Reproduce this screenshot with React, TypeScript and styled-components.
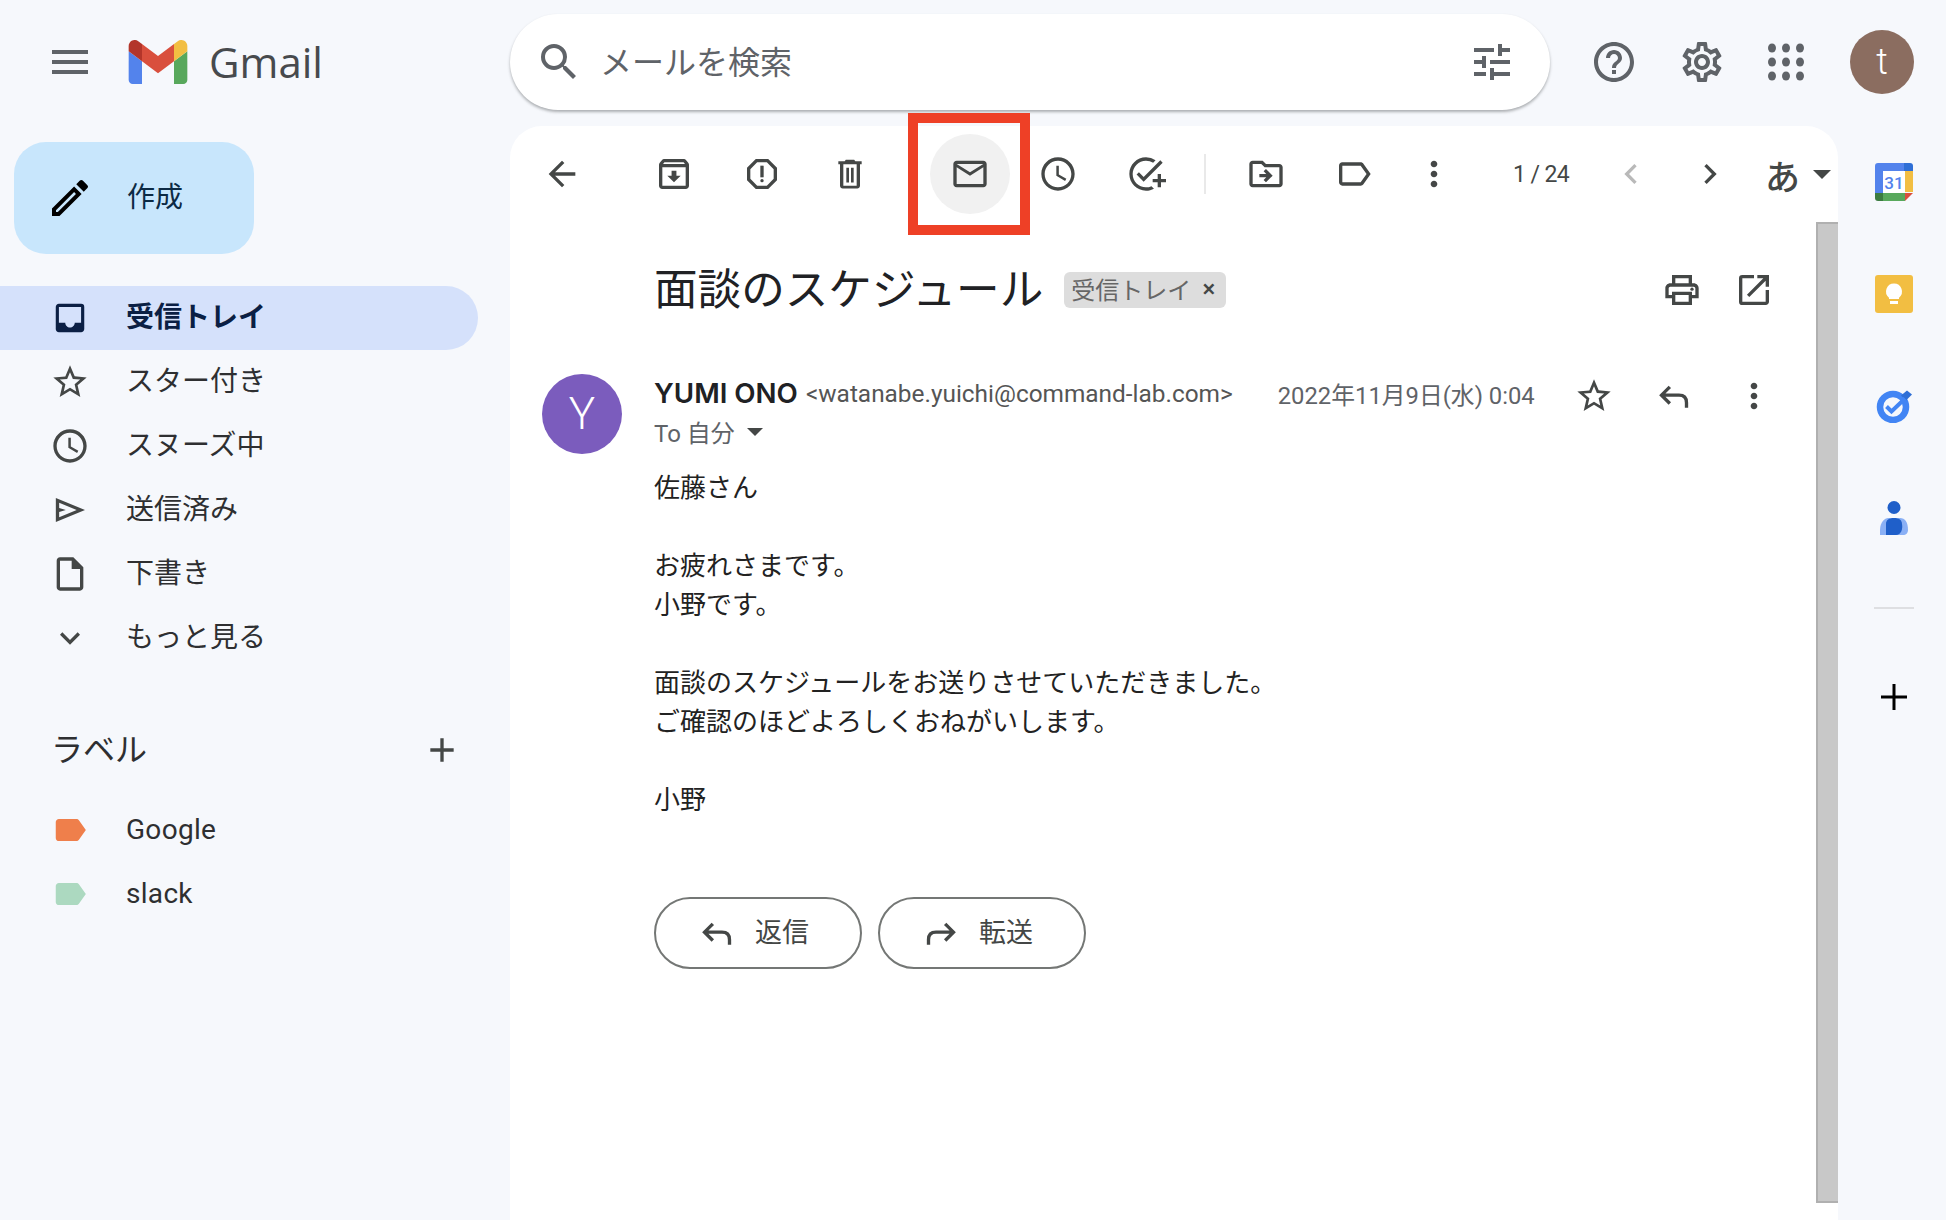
import React from 'react';
import styled, { createGlobalStyle } from 'styled-components';
import {
  MdAdd,
  MdArrowBack,
  MdChevronLeft,
  MdChevronRight,
  MdExpandMore,
  MdHelpOutline,
  MdInbox,
  MdLabel,
  MdMenu,
  MdMoreVert,
  MdOpenInNew,
  MdOutlineAccessTime,
  MdOutlineAddTask,
  MdOutlineArchive,
  MdOutlineCreate,
  MdOutlineDriveFileMove,
  MdOutlineEmail,
  MdOutlineInsertDriveFile,
  MdOutlineLabel,
  MdOutlinePrint,
  MdOutlineReport,
  MdOutlineSettings,
  MdSearch,
  MdStarBorder,
  MdTune,
} from 'react-icons/md';

const GlobalStyle = createGlobalStyle`
  html, body {
    margin: 0;
    padding: 0;
    background: #f6f8fc;
  }
  * {
    box-sizing: border-box;
  }
  body {
    font-family: Roboto, "Noto Sans CJK JP", sans-serif;
  }
`;

const Page = styled.div`
  width: 1946px;
  height: 1220px;
  overflow: hidden;
  display: flex;
  flex-direction: column;
  background: #f6f8fc;
`;

const Header = styled.header`
  height: 126px;
  padding-bottom: 2px;
  display: flex;
  align-items: center;
  flex-shrink: 0;
`;

const Brand = styled.div`
  width: 510px;
  padding-left: 46px;
  display: flex;
  align-items: center;
  color: #5f6368;
`;

const LogoMark = styled.svg`
  width: 60px;
  height: 44px;
  margin-left: 34px;
`;

const Wordmark = styled.span`
  margin-left: 21px;
  font-family: 'Open Sans', sans-serif;
  font-size: 42px;
  line-height: 48px;
  color: #474a4d;
`;

const SearchBar = styled.div`
  width: 1040px;
  height: 96px;
  padding: 0 34px 0 25px;
  display: flex;
  align-items: center;
  background: #fff;
  border-radius: 48px;
  box-shadow: 0 2px 3px rgba(60, 64, 67, 0.4);
  color: #5f6368;
`;

const SearchPlaceholder = styled.span`
  flex: 1;
  margin: 0 2px 4px 17px;
  font-size: 32px;
  color: #5f6368;
`;

const HeaderIcons = styled.div`
  display: flex;
  align-items: center;
  margin-left: 40px;
  gap: 40px;
  color: #5f6368;
`;

const AppsGrid = styled.svg`
  width: 48px;
  height: 48px;
  margin: 0 -4px;
  fill: #5f6368;
`;

const Account = styled.div`
  width: 64px;
  height: 64px;
  margin-left: 4px;
  border-radius: 50%;
  background: #8b6d60;
  color: #fff;
  font-size: 36px;
  font-weight: 300;
  display: flex;
  align-items: center;
  justify-content: center;
`;

const Body = styled.div`
  flex: 1;
  min-height: 0;
  display: flex;
`;

const Sidebar = styled.aside`
  width: 510px;
  flex-shrink: 0;
  padding-top: 16px;
`;

const Compose = styled.div`
  width: 240px;
  height: 112px;
  margin-left: 14px;
  margin-bottom: 32px;
  padding-left: 32px;
  display: flex;
  align-items: center;
  gap: 33px;
  border-radius: 32px;
  background: #c8e6fc;
  color: #0c2a44;
  font-size: 28px;
  svg {
    color: #000;
  }
`;

const ComposeText = styled.span`
  margin-bottom: 7px;
`;

const NavRow = styled.div<{ $active?: boolean }>`
  width: 478px;
  height: 64px;
  display: flex;
  align-items: center;
  border-radius: 0 32px 32px 0;
  font-size: 28px;
  background: ${({ $active }) => ($active ? '#d5e1fb' : 'transparent')};
  color: ${({ $active }) => ($active ? '#0b1f44' : '#2e2f31')};
  font-weight: ${({ $active }) => ($active ? 700 : 400)};
`;

const NavIcon = styled.span<{ $color?: string }>`
  width: 40px;
  height: 40px;
  margin: 0 36px 0 50px;
  display: flex;
  align-items: center;
  justify-content: center;
  color: ${({ $color }) => $color || '#444746'};
`;

const NavText = styled.span<{ $latin?: boolean }>`
  margin-bottom: ${({ $latin }) => ($latin ? 2 : 6)}px;
  letter-spacing: ${({ $latin }) => ($latin ? 0.3 : 0)}px;
`;

const LabelsHeader = styled.div`
  width: 478px;
  height: 64px;
  margin: 48px 0 16px;
  padding: 0 16px 0 51px;
  display: flex;
  align-items: center;
  justify-content: space-between;
  font-size: 32px;
  color: #2e2f31;
  svg {
    color: #444746;
  }
`;

const LabelsTitle = styled.span`
  margin-bottom: 6px;
`;

const Panel = styled.main`
  width: 1328px;
  flex-shrink: 0;
  display: flex;
  flex-direction: column;
  background: #fff;
  border-radius: 32px 32px 0 0;
`;

const Toolbar = styled.div`
  height: 96px;
  flex-shrink: 0;
  padding-left: 12px;
  display: flex;
  align-items: center;
  color: #444746;
`;

const ToolButton = styled.div<{ $width?: number; $gap?: number; $faded?: boolean }>`
  position: relative;
  width: ${({ $width }) => $width || 88}px;
  height: 80px;
  margin-left: ${({ $gap }) => $gap || 0}px;
  flex-shrink: 0;
  display: flex;
  align-items: center;
  justify-content: center;
  color: ${({ $faded }) => ($faded ? '#b9b9b9' : '#444746')};
  svg {
    position: relative;
  }
`;

const HoverCircle = styled.span`
  position: absolute;
  left: 4px;
  top: 0;
  width: 80px;
  height: 80px;
  border-radius: 50%;
  background: #f1f1f1;
`;

const Callout = styled.span`
  position: absolute;
  left: -18px;
  top: -21px;
  width: 122px;
  height: 122px;
  border: 10px solid #ee4026;
`;

const ToolDivider = styled.span`
  width: 2px;
  height: 40px;
  margin-left: 14px;
  background: #e9e9e9;
`;

const Pager = styled.span`
  width: 56px;
  margin: 0 22px 0 43px;
  flex-shrink: 0;
  font-size: 23px;
  letter-spacing: -0.6px;
  white-space: nowrap;
  color: #444746;
`;

const InputLang = styled.div`
  margin-left: 15px;
  display: flex;
  align-items: center;
  gap: 13px;
  font-size: 35px;
  font-weight: 500;
  color: #444746;
`;

const Caret = styled.span<{ $size?: number }>`
  width: 0;
  height: 0;
  border-left: ${({ $size }) => $size || 9}px solid transparent;
  border-right: ${({ $size }) => $size || 9}px solid transparent;
  border-top: ${({ $size }) => $size || 9}px solid #444746;
`;

const ScrollArea = styled.div`
  flex: 1;
  min-height: 0;
  display: flex;
`;

const Thread = styled.div`
  flex: 1;
  min-width: 0;
  padding-right: 42px;
`;

const SubjectRow = styled.div`
  height: 136px;
  padding-left: 144px;
  display: flex;
  align-items: center;
`;

const Subject = styled.h1`
  margin: 0 0 9px;
  font-size: 43.6px;
  font-weight: 400;
  color: #202124;
  white-space: nowrap;
`;

const Chip = styled.span`
  width: 162px;
  height: 36px;
  margin-left: 21px;
  padding: 0 11px 3px 7px;
  display: flex;
  align-items: center;
  justify-content: space-between;
  border-radius: 6px;
  background: #dddddd;
  color: #666;
  font-size: 24px;
  white-space: nowrap;
`;

const ChipClose = styled.span`
  font-size: 24px;
  font-family: Roboto, sans-serif;
  font-weight: 500;
  color: #444746;
`;

const SubjectActions = styled.div`
  margin-left: auto;
  display: flex;
  gap: 32px;
  color: #444746;
`;

const Message = styled.article`
  display: flex;
  padding: 16px 0 0 32px;
  gap: 32px;
`;

const Avatar = styled.div`
  width: 80px;
  height: 80px;
  flex-shrink: 0;
  border-radius: 50%;
  background: #7b5cbd;
  color: #fff;
  font-size: 44px;
  font-weight: 300;
  display: flex;
  align-items: center;
  justify-content: center;
`;

const MessageMain = styled.div`
  flex: 1;
  min-width: 0;
`;

const MetaRow = styled.div`
  height: 40px;
  display: flex;
  align-items: center;
  color: #444746;
`;

const SenderName = styled.span`
  margin-bottom: 2px;
  font-family: Inter, Roboto, sans-serif;
  font-size: 27.7px;
  font-weight: 600;
  color: #202124;
  white-space: nowrap;
`;

const SenderMail = styled.span`
  margin: 0 0 2px 8px;
  font-size: 24.4px;
  color: #555;
  white-space: nowrap;
`;

const Sent = styled.span`
  margin: 0 0 2px 45px;
  font-size: 23.8px;
  color: #5f6368;
  white-space: nowrap;
`;

const MetaActions = styled.div`
  margin: 3px 0 0 auto;
  display: flex;
  gap: 40px;
  color: #444746;
`;

const Recipient = styled.div`
  height: 40px;
  padding-bottom: 5px;
  display: flex;
  align-items: center;
  gap: 12px;
  font-size: 24px;
  color: #5f6368;
`;

const BodyText = styled.div`
  margin-top: 15px;
  font-size: 26px;
  line-height: 39px;
  color: #222;
`;

const ButtonRow = styled.div`
  margin-top: 77px;
  display: flex;
  gap: 16px;
`;

const PillButton = styled.div`
  width: 208px;
  height: 72px;
  padding-left: 41px;
  display: flex;
  align-items: center;
  gap: 18px;
  border: 2px solid #747775;
  border-radius: 36px;
  font-size: 27px;
  color: #444746;
`;

const PillLabel = styled.span`
  margin-bottom: 5px;
`;

const ScrollTrack = styled.div`
  width: 22px;
  margin-bottom: 17px;
  flex-shrink: 0;
  background: #c8c8c8;
  border-left: 2px solid #b0b0b0;
  border-top: 2px solid #b0b0b0;
  border-bottom: 2px solid #b0b0b0;
`;

const Rail = styled.aside`
  flex: 1;
  padding-left: 3px;
  display: flex;
  flex-direction: column;
  align-items: center;
`;

const RailItem = styled.div`
  height: 112px;
  display: flex;
  align-items: center;
  justify-content: center;
`;

const RailDivider = styled.div`
  width: 40px;
  height: 2px;
  margin: 33px 0 32px;
  background: #dedfe2;
`;

const ReplyIcon: React.FC<{ size?: number; flip?: boolean }> = ({ size = 40, flip }) => (
  <svg
    width={size}
    height={size}
    viewBox="0 0 24 24"
    fill="none"
    stroke="currentColor"
    strokeWidth="2"
    style={flip ? { transform: 'scaleX(-1)' } : undefined}
  >
    <path d="M9.5 6.5 4.5 11.5l5 5M4.5 11.5H15c3 0 4.5 1.6 4.5 4.5v3" />
  </svg>
);

const TrashIcon = () => (
  <svg width="40" height="40" viewBox="0 0 24 24" fill="currentColor">
    <path
      fillRule="evenodd"
      d="M9.5 3.4h5l.7.9H19v1.9h-1v12.9c0 1-.8 1.6-1.6 1.6H7.6c-.9 0-1.6-.7-1.6-1.6V6.2H5V4.3h3.8zM8 6.2v12.9h8V6.2z"
    />
    <path d="M9.8 8.3h1.6v8.8H9.8zM12.6 8.3h1.6v8.8h-1.6z" />
  </svg>
);

const SendIcon = () => (
  <svg width="40" height="40" viewBox="0 0 24 24" fill="currentColor">
    <path fillRule="evenodd" d="M3.5 4.8 21 12 3.5 19.2zM5.5 7.7v3.1l4 1.2-4 1.2v3.100L16 12z" />
  </svg>
);

const AppsIcon = () => (
  <AppsGrid viewBox="0 0 48 48">
    {[10, 24, 38].map((y) =>
      [10, 24, 38].map((x) => <ellipse key={`${x}-${y}`} cx={x} cy={y} rx="4" ry="4.6" />),
    )}
  </AppsGrid>
);

const GmailLogo = () => (
  <LogoMark viewBox="52 42 88 66">
    <path fill="#5383ec" d="M58 108h14V74L52 59v43c0 3.32 2.69 6 6 6" />
    <path fill="#58a85c" d="M120 108h14c3.32 0 6-2.69 6-6V59l-20 15" />
    <path fill="#f2be42" d="M120 48v26l20-15v-8c0-7.42-8.47-11.65-14.4-7.2" />
    <path fill="#d94f3d" d="M72 74V48l24 18 24-18v26L96 92" />
    <path fill="#b3352a" d="M52 51v8l20 15V48l-5.6-4.2c-5.94-4.45-14.4-.22-14.4 7.2" />
  </LogoMark>
);

const CalendarIcon = () => (
  <svg width="38" height="38" viewBox="0 0 38 38">
    <path fill="#fff" d="M8 8h22v22H8z" />
    <path fill="#5383ec" d="M3 0h26v8H8v22H0V3a3 3 0 0 1 3-3z" />
    <path fill="#2f6fd6" d="M29 0h6a3 3 0 0 1 3 3v5h-9z" />
    <path fill="#f2be42" d="M30 8h8v21h-8z" />
    <path fill="#58a85c" d="M8 30h22v8H8z" />
    <path fill="#3c7c41" d="M0 30h8v8H3a3 3 0 0 1-3-3z" />
    <path fill="#d94f3d" d="M30 30h8l-8 8z" />
    <text x="19" y="25.5" textAnchor="middle" fontSize="17" fontWeight="500" fontFamily="Roboto, sans-serif" fill="#5383ec">
      31
    </text>
  </svg>
);

const KeepIcon = () => (
  <svg width="38" height="38" viewBox="0 0 38 38">
    <rect width="38" height="38" rx="3" fill="#f2be42" />
    <path fill="#fff" d="M19 8.5a8 8 0 0 0-5 14.2V24h10v-1.3a8 8 0 0 0-5-14.2z" />
    <path fill="#fff" d="M15 26h8v3h-8z" />
  </svg>
);

const TasksIcon = () => (
  <svg width="36" height="34" viewBox="0 0 36 34">
    <circle cx="17" cy="18" r="13" fill="none" stroke="#4285f4" strokeWidth="6.5" />
    <path fill="#2f6fd6" d="M25 6.5 31 1.5l5 4-6 6z" />
    <path fill="none" stroke="#4285f4" strokeWidth="4" d="m10.5 17.5 5 5L29 9.5" />
  </svg>
);

const ContactsIcon = () => (
  <svg width="28" height="34" viewBox="0 0 28 34">
    <circle cx="14" cy="6.5" r="6.5" fill="#1f5fc9" />
    <path fill="#8ab0f5" d="M0 34v-5c0-8 5-12 8-12h12c5 0 8 4 8 12 0 3-2 5-5 5z" />
    <path fill="#1f5fc9" d="M6 34V23c0-4 3-6 8-6s8 2 8 6c1 5-1 11-6 11z" />
  </svg>
);

const ThinPlus = () => (
  <svg width="28" height="28" viewBox="0 0 28 28" stroke="#000" strokeWidth="3">
    <path d="M14 1v26M1 14h26" />
  </svg>
);

const navItems = [
  { icon: <MdStarBorder size={40} />, label: 'スター付き' },
  { icon: <MdOutlineAccessTime size={40} />, label: 'スヌーズ中' },
  { icon: <SendIcon />, label: '送信済み' },
  { icon: <MdOutlineInsertDriveFile size={40} />, label: '下書き' },
  { icon: <MdExpandMore size={40} />, label: 'もっと見る' },
];

const labels = [
  { name: 'Google', color: '#ef7f4b' },
  { name: 'slack', color: '#acd9c0' },
];

const bodyLines = [
  '佐藤さん',
  '',
  'お疲れさまです。',
  '小野です。',
  '',
  '面談のスケジュールをお送りさせていただきました。',
  'ご確認のほどよろしくおねがいします。',
  '',
  '小野',
];

export default function App() {
  return (
    <Page>
      <GlobalStyle />
      <Header>
        <Brand>
          <MdMenu size={48} />
          <GmailLogo />
          <Wordmark>Gmail</Wordmark>
        </Brand>
        <SearchBar>
          <MdSearch size={48} />
          <SearchPlaceholder>メールを検索</SearchPlaceholder>
          <MdTune size={48} />
        </SearchBar>
        <HeaderIcons>
          <MdHelpOutline size={48} />
          <MdOutlineSettings size={48} />
          <AppsIcon />
          <Account>t</Account>
        </HeaderIcons>
      </Header>
      <Body>
        <Sidebar>
          <Compose>
            <MdOutlineCreate size={48} />
            <ComposeText>作成</ComposeText>
          </Compose>
          <NavRow $active>
            <NavIcon $color="#0b1f44">
              <MdInbox size={38} />
            </NavIcon>
            <NavText>受信トレイ</NavText>
          </NavRow>
          {navItems.map((item) => (
            <NavRow key={item.label}>
              <NavIcon>{item.icon}</NavIcon>
              <NavText>{item.label}</NavText>
            </NavRow>
          ))}
          <LabelsHeader>
            <LabelsTitle>ラベル</LabelsTitle>
            <MdAdd size={40} />
          </LabelsHeader>
          {labels.map((label) => (
            <NavRow key={label.name}>
              <NavIcon $color={label.color}>
                <MdLabel size={38} />
              </NavIcon>
              <NavText $latin>{label.name}</NavText>
            </NavRow>
          ))}
        </Sidebar>
        <Panel>
          <Toolbar>
            <ToolButton $width={80}>
              <MdArrowBack size={40} />
            </ToolButton>
            <ToolButton $gap={28}>
              <MdOutlineArchive size={40} />
            </ToolButton>
            <ToolButton>
              <MdOutlineReport size={40} />
            </ToolButton>
            <ToolButton>
              <TrashIcon />
            </ToolButton>
            <ToolButton $gap={32}>
              <HoverCircle />
              <MdOutlineEmail size={40} />
              <Callout />
            </ToolButton>
            <ToolButton>
              <MdOutlineAccessTime size={40} />
            </ToolButton>
            <ToolButton>
              <MdOutlineAddTask size={40} />
            </ToolButton>
            <ToolDivider />
            <ToolButton $gap={16}>
              <MdOutlineDriveFileMove size={40} />
            </ToolButton>
            <ToolButton>
              <MdOutlineLabel size={40} />
            </ToolButton>
            <ToolButton $width={72}>
              <MdMoreVert size={40} />
            </ToolButton>
            <Pager>1 / 24</Pager>
            <ToolButton $width={79} $faded>
              <MdChevronLeft size={40} />
            </ToolButton>
            <ToolButton $width={80}>
              <MdChevronRight size={40} />
            </ToolButton>
            <InputLang>
              あ
              <Caret />
            </InputLang>
          </Toolbar>
          <ScrollArea>
            <Thread>
              <SubjectRow>
                <Subject>面談のスケジュール</Subject>
                <Chip>
                  受信トレイ
                  <ChipClose>×</ChipClose>
                </Chip>
                <SubjectActions>
                  <MdOutlinePrint size={40} />
                  <MdOpenInNew size={40} />
                </SubjectActions>
              </SubjectRow>
              <Message>
                <Avatar>Y</Avatar>
                <MessageMain>
                  <MetaRow>
                    <SenderName>YUMI ONO</SenderName>
                    <SenderMail>&lt;watanabe.yuichi@command-lab.com&gt;</SenderMail>
                    <Sent>2022年11月9日(水) 0:04</Sent>
                    <MetaActions>
                      <MdStarBorder size={40} />
                      <ReplyIcon />
                      <MdMoreVert size={40} />
                    </MetaActions>
                  </MetaRow>
                  <Recipient>
                    To 自分
                    <Caret $size={8} />
                  </Recipient>
                  <BodyText>
                    {bodyLines.map((line, i) => (
                      <div key={i}>{line || '\u00a0'}</div>
                    ))}
                  </BodyText>
                  <ButtonRow>
                    <PillButton>
                      <ReplyIcon />
                      <PillLabel>返信</PillLabel>
                    </PillButton>
                    <PillButton>
                      <ReplyIcon flip />
                      <PillLabel>転送</PillLabel>
                    </PillButton>
                  </ButtonRow>
                </MessageMain>
              </Message>
            </Thread>
            <ScrollTrack />
          </ScrollArea>
        </Panel>
        <Rail>
          <RailItem>
            <CalendarIcon />
          </RailItem>
          <RailItem>
            <KeepIcon />
          </RailItem>
          <RailItem>
            <TasksIcon />
          </RailItem>
          <RailItem>
            <ContactsIcon />
          </RailItem>
          <RailDivider />
          <RailItem>
            <ThinPlus />
          </RailItem>
        </Rail>
      </Body>
    </Page>
  );
}
